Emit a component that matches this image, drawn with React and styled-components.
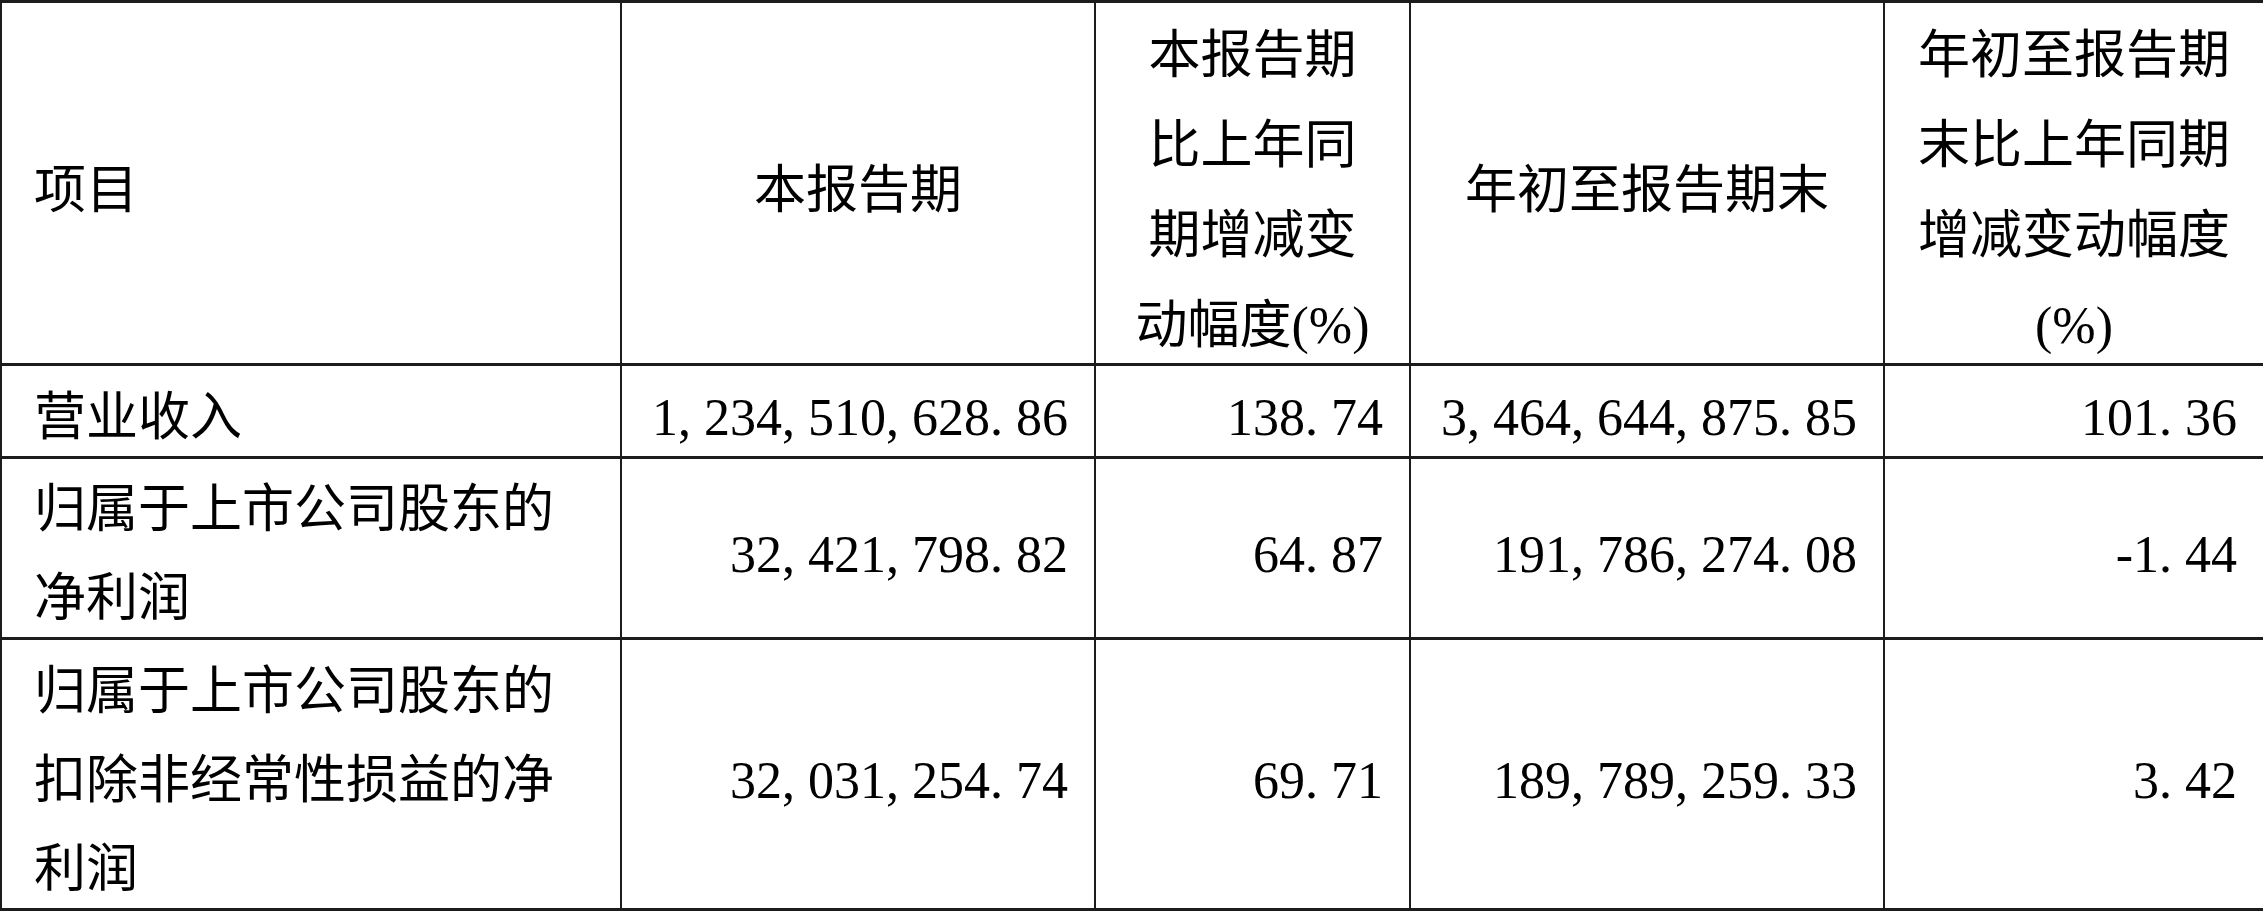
import React from "react";
import styled, { createGlobalStyle } from "styled-components";

const GlobalStyle = createGlobalStyle`
  html, body {
    margin: 0;
    padding: 0;
    background: #ffffff;
    overflow: hidden;
  }
  body {
    font-family: "Liberation Serif", "Noto Sans CJK SC", serif;
    color: #000000;
  }
`;

const Table = styled.table`
  width: 2263px;
  border-collapse: collapse;
  table-layout: fixed;
  font-size: 52px;
  line-height: 90px;
  font-weight: 400;
`;

const Row = styled.tr`
  height: ${(p) => p.$h}px;
`;

const cellBase = `
  border-top: 3px solid #1c1c1c;
  border-bottom: 3px solid #1c1c1c;
  border-left: 2px solid #1c1c1c;
  border-right: 2px solid #1c1c1c;
  vertical-align: middle;
  white-space: nowrap;
  font-weight: 400;
`;

const HeadCell = styled.th`
  ${cellBase}
  text-align: ${(p) => (p.$left ? "left" : "center")};
  padding: 0 0 0 ${(p) => (p.$left ? "32px" : "0")};
`;

const LabelCell = styled.td`
  ${cellBase}
  text-align: left;
  padding: 0 0 0 32px;
`;

const NumCell = styled.td`
  ${cellBase}
  text-align: right;
  padding: 0 26px 0 0;
`;

/* shifts the text down a little without changing the row's height */
const Text = styled.div`
  line-height: ${(p) => p.$lh || 90}px;
  margin-top: ${(p) => p.$shift}px;
  margin-bottom: -${(p) => p.$shift}px;
`;

const Glyph = styled.span`
  display: inline-block;
  width: 0.5em;
  text-align: ${(p) => (p.$right ? "right" : "left")};
`;

const Num = ({ v }) => (
  <>
    {[...v].map((c, i) => (
      <Glyph key={i} $right={c === "-"}>
        {c}
      </Glyph>
    ))}
  </>
);

const Lines = ({ lines }) =>
  lines.map((l, i) => (
    <React.Fragment key={i}>
      {i > 0 && <br />}
      {l}
    </React.Fragment>
  ));

const rows = [
  {
    h: 93,
    label: ["营业收入"],
    vals: ["1,234,510,628.86", "138.74", "3,464,644,875.85", "101.36"],
  },
  {
    h: 181,
    label: ["归属于上市公司股东的", "净利润"],
    vals: ["32,421,798.82", "64.87", "191,786,274.08", "-1.44"],
  },
  {
    h: 271,
    label: ["归属于上市公司股东的", "扣除非经常性损益的净", "利润"],
    vals: ["32,031,254.74", "69.71", "189,789,259.33", "3.42"],
  },
];

export default function App() {
  return (
    <>
      <GlobalStyle />
      <Table>
        <colgroup>
          <col style={{ width: 620 }} />
          <col style={{ width: 474 }} />
          <col style={{ width: 315 }} />
          <col style={{ width: 474 }} />
          <col style={{ width: 380 }} />
        </colgroup>
        <thead>
          <Row $h={363}>
            <HeadCell $left>
              <Text $shift={8}>项目</Text>
            </HeadCell>
            <HeadCell>
              <Text $shift={8}>本报告期</Text>
            </HeadCell>
            <HeadCell>
              <Text $shift={8}>
                <Lines lines={["本报告期", "比上年同", "期增减变", "动幅度(%)"]} />
              </Text>
            </HeadCell>
            <HeadCell>
              <Text $shift={8}>年初至报告期末</Text>
            </HeadCell>
            <HeadCell>
              <Text $shift={8}>
                <Lines lines={["年初至报告期", "末比上年同期", "增减变动幅度", "(%)"]} />
              </Text>
            </HeadCell>
          </Row>
        </thead>
        <tbody>
          {rows.map((r, i) => (
            <Row key={i} $h={r.h}>
              <LabelCell>
                <Text $shift={6} $lh={89}>
                  <Lines lines={r.label} />
                </Text>
              </LabelCell>
              {r.vals.map((v, j) => (
                <NumCell key={j}>
                  <Text $shift={6} $lh={89}>
                    <Num v={v} />
                  </Text>
                </NumCell>
              ))}
            </Row>
          ))}
        </tbody>
      </Table>
    </>
  );
}
